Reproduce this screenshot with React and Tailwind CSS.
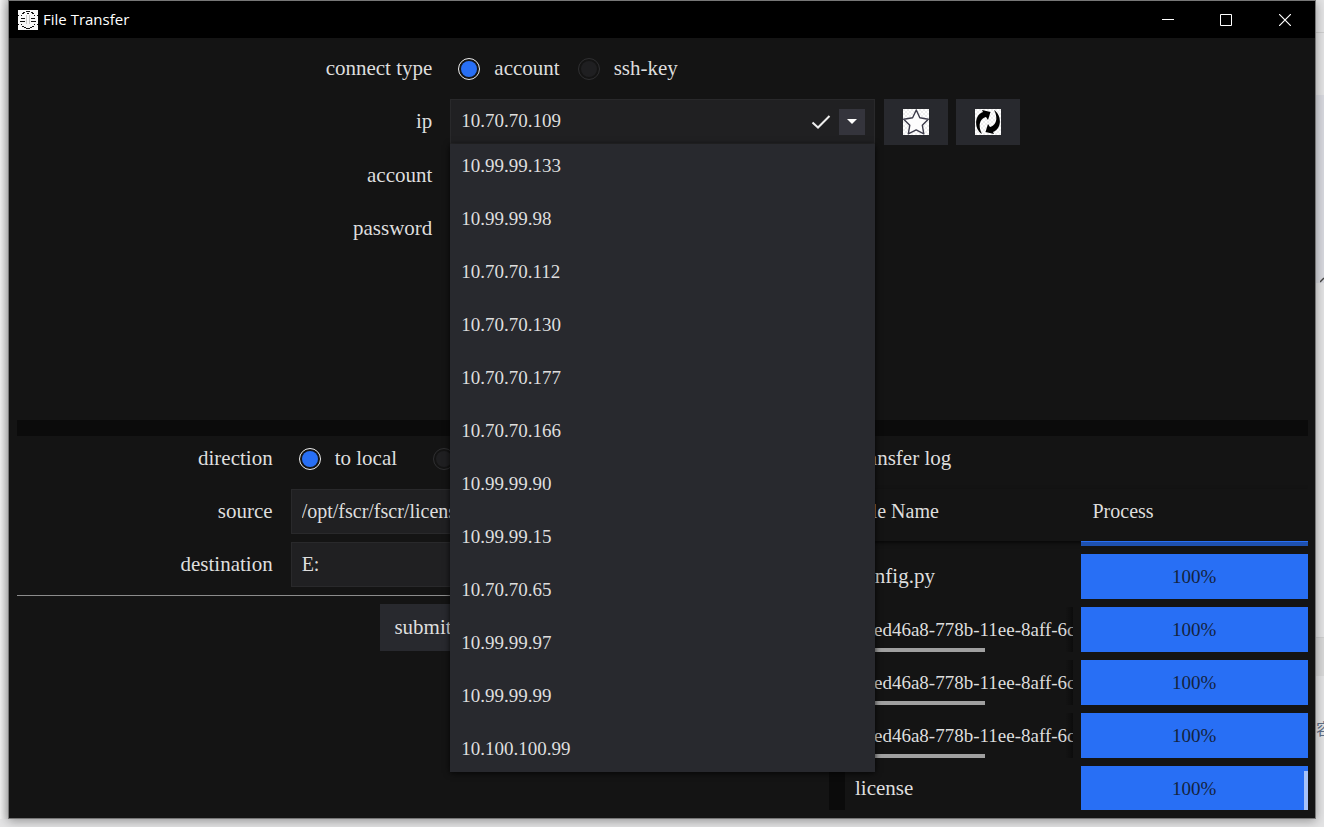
import React, { useState } from 'react';

const hosts = [
  '10.99.99.133',
  '10.99.99.98',
  '10.70.70.112',
  '10.70.70.130',
  '10.70.70.177',
  '10.70.70.166',
  '10.99.99.90',
  '10.99.99.15',
  '10.70.70.65',
  '10.99.99.97',
  '10.99.99.99',
  '10.100.100.99',
];

const transfers = [
  { id: 1, name: 'config.py', process: '100%' },
  { id: 2, name: '53ed46a8-778b-11ee-8aff-6c2b59', process: '100%', long: true },
  { id: 3, name: '53ed46a8-778b-11ee-8aff-6c2b59', process: '100%', long: true },
  { id: 4, name: '53ed46a8-778b-11ee-8aff-6c2b59', process: '100%', long: true },
  { id: 5, name: 'license', process: '100%' },
];

const AppIcon = () => (
  <svg viewBox="0 0 20 20" className="size-5 shrink-0" aria-hidden="true">
    <rect width="20" height="20" fill="#f8f8f8" />
    <g fill="#111">
      <path d="M8 1h4v1h-4zM5 2h2v1h-2zM13 2h2v1h-2zM4 3h2v1h-2zM14 3h2v1h-2zM9 3h2v1h-2z" />
      <path d="M0 5h1v1h-1zM3 5h1v1h-1zM16 5h1v1h-1zM19 5h1v1h-1z" />
      <path d="M3 8h4v1h-4zM2 11h5v1h-5zM13 8h4v1h-4zM13 11h5v1h-5z" />
      <path d="M0 14h1v1h-1zM3 14h1v1h-1zM16 14h1v1h-1zM19 14h1v1h-1z" />
      <path d="M4 16h2v1h-2zM14 16h2v1h-2zM6 17h2v1h-2zM12 17h2v1h-2zM8 18h4v1h-4z" />
    </g>
    <path d="M8 5h1v9h-1zM11 5h1v9h-1z" fill="#c8c8c8" />
  </svg>
);

const Checker = ({ id }) => (
  <>
    <defs>
      <pattern id={id} width="4" height="4" patternUnits="userSpaceOnUse">
        <rect width="4" height="4" fill="#fff" />
        <path d="M0 0h2v2h-2zM2 2h2v2h-2z" fill="#efefef" />
      </pattern>
    </defs>
    <rect width="26" height="26" fill={`url(#${id})`} />
  </>
);

const StarIcon = () => (
  <svg viewBox="0 0 26 26" className="size-[26px]" aria-hidden="true">
    <Checker id="star-bg" />
    <path
      d="M13.3 1 L16.8 8.8 L25.3 10.2 L19.3 16.2 L20.8 24.8 L13.2 20.9 L5.3 24.8 L6.8 16.2 L0.7 10.2 L9.6 8.8 Z"
      fill="#fdfdfd"
      stroke="#3c3b4a"
      strokeWidth="1.4"
      strokeLinejoin="round"
    />
  </svg>
);

const RefreshIcon = () => (
  <svg viewBox="0 0 26 26" className="size-[26px]" aria-hidden="true">
    <Checker id="refresh-bg" />
    <path d="M7 25 C-1 20 -1 6 8 3 L7 1 L15.5 3 L13 11 L11 8 C4 10 3 18 7 25Z" />
    <path d="M19 1 C27 6 27 20 18 23 L19 25 L10.5 23 L13 15 L15 18 C22 16 23 8 19 1Z" />
  </svg>
);

const Radio = ({ name, label, checked, onChange }) => (
  <label className="flex items-center gap-[14px] text-[21px]">
    <input
      type="radio"
      name={name}
      checked={checked}
      onChange={onChange}
      className="size-[22px] shrink-0 appearance-none rounded-full border border-[#2f2f31] bg-[#1f1f21] bg-clip-content p-[2px] checked:border-[#ececec] checked:bg-[#286ff5]"
    />
    <span>{label}</span>
  </label>
);

const Row = ({ label, htmlFor, children, extra }) => (
  <div className="grid grid-cols-3 gap-x-[9px]">
    <label htmlFor={htmlFor} className="flex h-[45px] items-center justify-end pr-[9px] text-[21px]">
      {label}
    </label>
    {children}
    {extra}
  </div>
);

const fieldClass = 'h-[45px] w-full min-w-0 border border-[#29292b] bg-[#202022] px-[10px] outline-none';

const TitleBar = () => (
  <header className="flex h-[37px] shrink-0 items-center bg-black pl-[9px] font-['Open_Sans','Noto_Sans',sans-serif] text-white">
    <AppIcon />
    <h1 className="ml-[5px] flex-1 text-[15px]">File Transfer</h1>
    <button aria-label="Minimize" className="flex h-full w-[58px] items-center justify-center">
      <svg viewBox="0 0 12 12" className="size-3"><path d="M0 5.5h12" stroke="#fff" /></svg>
    </button>
    <button aria-label="Maximize" className="flex h-full w-[58px] items-center justify-center">
      <svg viewBox="0 0 12 12" className="size-3"><path d="M.5 .5h11v11h-11z" fill="none" stroke="#fff" /></svg>
    </button>
    <button aria-label="Close" className="flex h-full w-[60px] items-center justify-center">
      <svg viewBox="0 0 12 12" className="size-3"><path d="M0 0l12 12M12 0L0 12" stroke="#fff" strokeWidth="1.2" /></svg>
    </button>
  </header>
);

const HostPicker = ({ value, onChange }) => {
  const [open, setOpen] = useState(true);

  const handleSelect = (host) => {
    onChange(host);
    setOpen(false);
  };

  return (
    <div className="relative">
      <div className="flex h-[45px] items-center border border-[#29292b] bg-[#202022] pr-[9px] pl-[10px]">
        <input
          id="ip"
          type="text"
          value={value}
          onChange={(e) => onChange(e.target.value)}
          className="min-w-0 flex-1 bg-transparent text-[19px] outline-none"
        />
        <svg viewBox="0 0 20 16" className="mr-2 h-4 w-5" aria-hidden="true">
          <path d="M1.5 8.5 L7 13.5 L18.5 2" fill="none" stroke="#eee" strokeWidth="2" />
        </svg>
        <button
          aria-label="Show hosts"
          onClick={() => setOpen(!open)}
          className="flex size-[26px] items-center justify-center bg-[#34343c]"
        >
          <svg viewBox="0 0 10 5" className="h-[5px] w-[10px]"><path d="M0 0h10L5 5z" fill="#fff" /></svg>
        </button>
      </div>
      {open && (
        <ul className="absolute inset-x-0 top-[45px] z-10 flex flex-col gap-2 bg-[#28292e] shadow-[0_1px_6px_rgba(0,0,0,0.8)]">
          {hosts.map((host) => (
            <li key={host}>
              <button onClick={() => handleSelect(host)} className="block h-[45px] w-full px-[11px] text-left text-[19px]">
                {host}
              </button>
            </li>
          ))}
        </ul>
      )}
    </div>
  );
};

const ConnectForm = () => {
  const [connectType, setConnectType] = useState('account');
  const [ip, setIp] = useState('10.70.70.109');

  return (
    <section className="flex min-h-0 flex-1 basis-0 flex-col gap-2">
      <Row label="connect type">
        <div className="flex items-center gap-[18px] pl-2">
          <Radio name="type" label="account" checked={connectType === 'account'} onChange={() => setConnectType('account')} />
          <Radio name="type" label="ssh-key" checked={connectType === 'ssh-key'} onChange={() => setConnectType('ssh-key')} />
        </div>
      </Row>
      <Row
        label="ip"
        htmlFor="ip"
        extra={
          <div className="flex gap-2">
            <button aria-label="Save host" className="flex h-[46px] w-16 items-center justify-center bg-[#28292e]"><StarIcon /></button>
            <button aria-label="Refresh" className="flex h-[46px] w-16 items-center justify-center bg-[#28292e]"><RefreshIcon /></button>
          </div>
        }
      >
        <HostPicker value={ip} onChange={setIp} />
      </Row>
      <Row label="account" htmlFor="account">
        <input id="account" type="text" className={fieldClass} />
      </Row>
      <Row label="password" htmlFor="password">
        <input id="password" type="password" className={fieldClass} />
      </Row>
    </section>
  );
};

const TransferForm = () => {
  const [direction, setDirection] = useState('local');

  return (
    <section className="flex min-w-0 flex-1 flex-col gap-2">
      <Row label="direction">
        <div className="flex items-center gap-9 pl-2 whitespace-nowrap">
          <Radio name="direction" label="to local" checked={direction === 'local'} onChange={() => setDirection('local')} />
          <Radio name="direction" label="to remote" checked={direction === 'remote'} onChange={() => setDirection('remote')} />
        </div>
      </Row>
      <Row label="source" htmlFor="source">
        <input id="source" type="text" defaultValue="/opt/fscr/fscr/license" className={`${fieldClass} text-[20px]`} />
      </Row>
      <Row label="destination" htmlFor="destination">
        <input id="destination" type="text" defaultValue="E:" className={`${fieldClass} text-[20px]`} />
      </Row>
      <hr className="border-[#8c8c8c]" />
      <button className="h-[47px] self-center bg-[#28292e] px-[14px] text-[21px]">submit</button>
    </section>
  );
};

const TransferLog = () => (
  <section className="relative w-[463px] shrink-0 overflow-hidden">
    <h2 className="flex h-[45px] items-center pl-[10px] text-[21px]">transfer log</h2>
    <table className="mt-2 w-full table-fixed border-collapse">
      <thead>
        <tr className="h-[52px] text-left align-top text-[20px] leading-[45px] shadow-[0_2px_4px_rgba(0,0,0,0.6)]">
          <th className="p-0 pl-[10px] font-normal">File Name</th>
          <th className="p-0 pl-4 font-normal">Process</th>
        </tr>
      </thead>
      <tbody>
        <tr>
          <td className="p-0" />
          <td className="p-0 pb-2 pl-1">
            <div className="h-[5px] border-t border-[#286ff5] bg-[#1e51b0]" />
          </td>
        </tr>
        {transfers.map((item) => (
          <tr key={item.id}>
            <td className="p-0 pr-1 pb-2">
              <div className={item.long ? 'relative h-[45px] overflow-hidden pl-[10px] text-[19px] leading-[45px] whitespace-nowrap' : 'h-[45px] pl-[10px] text-[21px] leading-[45px]'}>
                {item.name}
                {item.long && <span className="absolute bottom-0 left-0 h-1 w-[140px] bg-[#a0a0a0]" />}
                {item.long && <span className="absolute inset-y-0 right-0 w-2 bg-linear-to-r from-transparent to-black/40" />}
              </div>
            </td>
            <td className="p-0 pb-2 pl-1">
              <div className="h-[45px] bg-[#286ff5] text-center text-[19px] leading-[45px] text-[#14233f]">{item.process}</div>
            </td>
          </tr>
        ))}
      </tbody>
    </table>
    <span className="absolute right-0 bottom-0 h-[39px] w-1 bg-[#a6c2f9]" />
  </section>
);

const App = () => {
  return (
    <div className="grid h-screen min-h-[640px] grid-cols-[8px_1fr_8px] grid-rows-[1fr_8px] overflow-hidden bg-[#e4e4e5] font-['Liberation_Serif',serif] text-[#dedede]">
      <div className="bg-linear-to-r from-[#f0f0f0] to-[#d4d4d4]" />
      <main className="z-10 flex min-h-0 flex-col border border-[#777777] bg-[#141414] shadow-[0_2px_10px_rgba(0,0,0,0.35)]">
        <TitleBar />
        <div className="flex min-h-0 flex-1 flex-col p-2 pr-[7px]">
          <ConnectForm />
          <div className="h-4 shrink-0 bg-[#0b0b0b]" />
          <div className="flex min-h-0 flex-1 basis-0">
            <TransferForm />
            <div className="w-4 shrink-0 bg-[#0b0b0b]" />
            <TransferLog />
          </div>
        </div>
      </main>
      {/* strip of the desktop behind the window */}
      <div className="flex flex-col overflow-hidden font-['Noto_Sans_CJK_SC',sans-serif] text-[16px] text-[#5d6f88]">
        <div className="h-[33px] border-b border-[#cfcfcf]" />
        <div className="h-[62px]" />
        <div className="flex h-[188px] items-end justify-end bg-[#d8d9df]">
          <svg viewBox="0 0 4 6" className="h-[6px] w-1"><path d="M0 5L4 1" stroke="#444" strokeWidth="1.5" /></svg>
        </div>
        <div className="h-[354px]" />
        <div className="h-[39px] border-t border-[#cfcfcf] bg-[#d9d9d9]" />
        <div className="mt-10 w-4 leading-6">容</div>
      </div>
    </div>
  );
};

export default App;
